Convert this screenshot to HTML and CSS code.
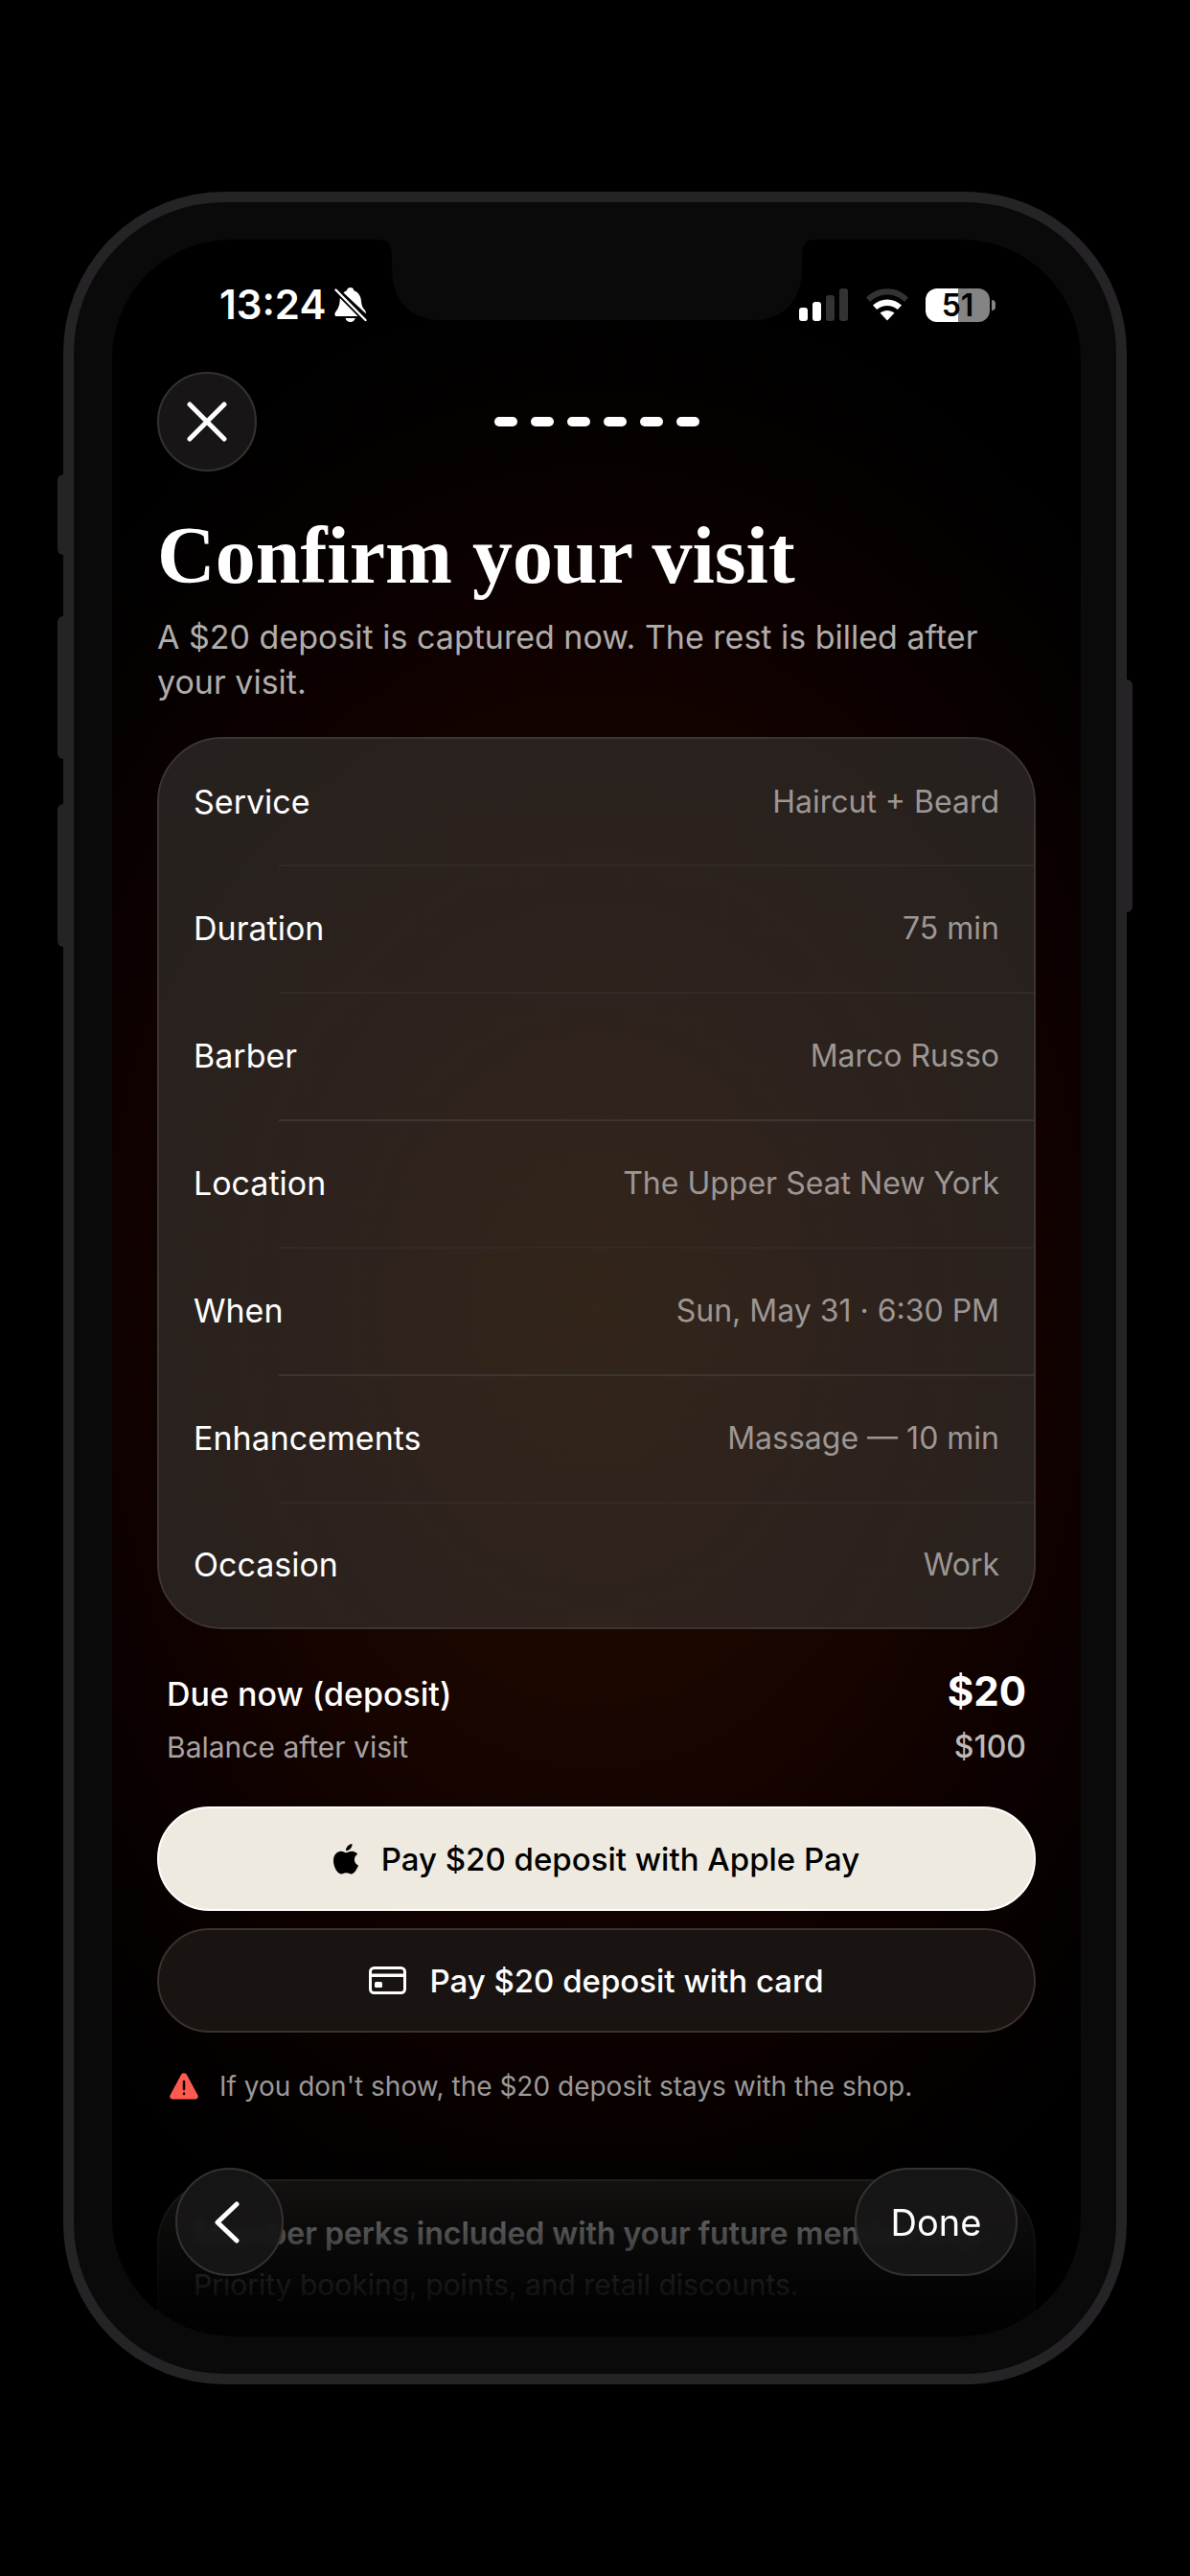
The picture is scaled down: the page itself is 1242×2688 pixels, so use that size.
FILE: index.html
```html
<!DOCTYPE html>
<html lang="en">
<head>
    <meta charset="UTF-8">
    <meta name="viewport" content="width=device-width, initial-scale=1.0">
    <title>Confirm your visit</title>
    <link rel="stylesheet" href="styles.css">
</head>
<body>
    <div class="phone">
        <span class="side-btn mute"></span>
        <span class="side-btn vol-up"></span>
        <span class="side-btn vol-down"></span>
        <span class="side-btn power"></span>

        <div class="screen">
            <svg class="notch" viewBox="0 0 456 84" aria-hidden="true">
                <path d="M0 0H456C446 0 442 6 442 18V30C442 62 424 84 392 84H64C32 84 14 62 14 30V18C14 6 10 0 0 0Z"/>
            </svg>

            <div class="status-bar">
                <div class="status-left">
                    <span class="time">13:24</span>
                    <svg width="34" height="36" viewBox="0 0 34 36" aria-hidden="true">
                        <path fill="#fff" d="M9.500 5.500C10.500 4.300 11.800 3.600 13 3.200C13.300 1.200 14.800 0 16.700 0C18.600 0 20.100 1.200 20.400 3.200C25 4.700 27.500 8.600 28 14C28.300 18.500 29.300 21 31.500 23.200C33 24.800 33 26 32.800 27.200Z"/>
                        <path fill="#fff" d="M5.800 11L24.500 30H2.200C0 30 0 27.500 1.200 25.500C4 21.800 5.600 19.500 5.800 11Z"/>
                        <path fill="#fff" d="M11.500 32H21.800C21 34.600 19.300 36 16.700 36C14.100 36 12.300 34.600 11.500 32Z"/>
                        <path stroke="#fff" stroke-width="2.400" stroke-linecap="round" d="M1.500 2.500L32.500 34"/>
                    </svg>
                </div>
                <div class="status-right">
                    <svg width="52" height="34" viewBox="0 0 52 34" aria-hidden="true">
                        <rect x="0" y="20" width="9" height="14" rx="3" fill="#fff"/>
                        <rect x="14" y="14" width="9" height="20" rx="3" fill="#fff"/>
                        <rect x="28" y="7" width="9" height="27" rx="3" fill="#333"/>
                        <rect x="42" y="0" width="9" height="34" rx="3" fill="#333"/>
                    </svg>
                    <svg width="46" height="34" viewBox="0 0 46 34" aria-hidden="true">
                        <path fill="#333" d="M1 9.500C13-3 33-3 45 9.500L41 14C31 4 15 4 5 14Z"/>
                        <path fill="#fff" d="M8 17.500C16.500 9.500 29.500 9.500 38 17.500L33.800 22C27.500 16.500 18.500 16.500 12.200 22Z"/>
                        <path fill="#fff" d="M15.500 25.500C20 22 26 22 30.500 25.500L23 33.500Z"/>
                    </svg>
                    <span class="battery"><span class="battery-level">51</span></span>
                </div>
            </div>

            <div class="content">
                <div class="top-bar">
                    <button class="glass close-btn" aria-label="Close">
                        <svg width="42" height="42" viewBox="0 0 42 42" aria-hidden="true">
                            <path d="M3 3L39 39M39 3L3 39"/>
                        </svg>
                    </button>
                    <div class="steps">
                        <span></span><span></span><span></span><span></span><span></span><span></span>
                    </div>
                </div>

                <h1>Confirm your visit</h1>
                <p class="intro">A $20 deposit is captured now. The rest is billed after your visit.</p>

                <dl class="summary">
                    <div class="row"><dt>Service</dt><dd>Haircut + Beard</dd></div>
                    <div class="row"><dt>Duration</dt><dd>75 min</dd></div>
                    <div class="row"><dt>Barber</dt><dd>Marco Russo</dd></div>
                    <div class="row strong"><dt>Location</dt><dd>The Upper Seat New York</dd></div>
                    <div class="row"><dt>When</dt><dd>Sun, May 31 · 6:30 PM</dd></div>
                    <div class="row strong"><dt>Enhancements</dt><dd>Massage — 10 min</dd></div>
                    <div class="row"><dt>Occasion</dt><dd>Work</dd></div>
                </dl>

                <dl class="totals">
                    <div class="due"><dt>Due now (deposit)</dt><dd>$20</dd></div>
                    <div class="balance"><dt>Balance after visit</dt><dd>$100</dd></div>
                </dl>

                <div class="actions">
                    <button class="pay apple-pay">
                        <svg width="26" height="32" viewBox="0 0 26 32" aria-hidden="true">
                            <path fill="#000" d="M19.500 0C19.800 3.900 16.600 7.300 13 7.200C12.700 3.700 16 .300 19.500 0ZM13.200 9.300C14.700 9.300 16.400 7.700 19.300 7.700C21.800 7.700 24 9 25.200 10.800C20.500 13.700 21 20.500 26 22.400C24.800 25.900 21.900 31.300 18.600 31.400C16.600 31.400 15.800 30.200 13.400 30.200C11 30.200 10.100 31.400 8.200 31.400C4.200 31.400 0 24.200 0 17.800C0 11.400 3.900 7.900 7.900 7.800C10.200 7.800 12 9.300 13.200 9.300Z"/>
                        </svg>
                        <span>Pay $20 deposit with Apple Pay</span>
                    </button>
                    <button class="pay glass">
                        <svg width="39" height="29" viewBox="0 0 39 29" aria-hidden="true">
                            <rect x="1.500" y="1.500" width="36" height="26" rx="4" fill="none" stroke="#fff" stroke-width="3"/>
                            <path stroke="#fff" stroke-width="3.500" d="M2 9.200H37"/>
                            <rect x="6" y="16" width="8" height="6" rx="1.500" fill="#fff"/>
                        </svg>
                        <span>Pay $20 deposit with card</span>
                    </button>
                </div>

                <p class="warning">
                    <svg width="30" height="28" viewBox="0 0 30 28" aria-hidden="true">
                        <path fill="#ff5a50" d="M12 2C13.300-.500 16.700-.500 18 2L29.300 23C30.500 25.400 29.200 27.500 26.600 27.500H3.400C.800 27.500-.500 25.400 .700 23Z"/>
                        <path stroke="#120000" stroke-width="2.600" stroke-linecap="round" d="M15 9V17M15 21.500V22"/>
                    </svg>
                    <span>If you don't show, the $20 deposit stays with the shop.</span>
                </p>

                <div class="perks">
                    <h2>Member perks included with your future membership</h2>
                    <p>Priority booking, points, and retail discounts.</p>
                </div>
            </div>

            <div class="fade"></div>
            <div class="bottom-bar">
                <button class="glass back-btn" aria-label="Back">
                    <svg width="34" height="44" viewBox="0 0 34 44" aria-hidden="true">
                        <path d="M24 3L4 22L24 41"/>
                    </svg>
                </button>
                <button class="glass done-btn">Done</button>
            </div>
        </div>
    </div>
</body>
</html>
```
FILE: styles.css
```css
* {
    box-sizing: border-box;
}
body {
    margin: 0;
    min-height: 100vh;
    padding: 200px 66px;
    background: #000;
    color: #fff;
    font-family: Inter, "Liberation Sans", sans-serif;
}
h1, h2, p, dl, dd {
    margin: 0;
}
button {
    font: inherit;
    color: inherit;
    border: none;
    padding: 0;
    cursor: pointer;
}
svg {
    display: block;
    flex: none;
}

/* device */
.phone {
    position: relative;
    padding: 39px 37px 39px 40px;
    border: 11px solid #252326;
    border-radius: 168px;
    background: #0a0a0a;
}
.side-btn {
    position: absolute;
    left: -17px;
    width: 6px;
    height: 149px;
    border-radius: 6px 0 0 6px;
    background: #252326;
}
.mute {
    top: 284px;
    height: 84px;
}
.vol-up {
    top: 432px;
}
.vol-down {
    top: 628px;
}
.power {
    left: auto;
    right: -17px;
    top: 498px;
    height: 243px;
    border-radius: 0 6px 6px 0;
}
.screen {
    position: relative;
    height: 2188px;
    overflow: hidden;
    border-radius: 124px;
    background: radial-gradient(ellipse 760px 1060px at 50% 51%, #240c00 0%, #1a0600 40%, #0f0100 66%, #040100 88%, #000 100%);
}
.notch {
    position: absolute;
    top: 0;
    left: 50%;
    width: 456px;
    height: 84px;
    margin-left: -228px;
    fill: #0a0a0a;
}

/* status bar */
.status-bar {
    display: flex;
    justify-content: space-between;
    align-items: center;
    height: 138px;
    padding: 0 95px 2px 112px;
}
.status-left, .status-right {
    display: flex;
    align-items: center;
}
.status-left {
    gap: 9px;
}
.status-right {
    gap: 17px;
}
.time {
    font-size: 42px;
    line-height: 48px;
    font-weight: 600;
}
.battery {
    position: relative;
    width: 67px;
    height: 35px;
    border-radius: 12px;
    background: linear-gradient(90deg, #fff 51%, #848484 51%);
}
.battery::after {
    content: "";
    position: absolute;
    right: -6px;
    top: 12px;
    width: 4px;
    height: 11px;
    border-radius: 0 4px 4px 0;
    background: #848484;
}
.battery-level {
    display: block;
    text-align: center;
    color: #000;
    font-size: 32px;
    line-height: 35px;
    font-weight: 600;
}

/* content */
.content {
    padding: 0 47px;
}
.glass {
    border: 2px solid #353130;
    background: #171515;
}
.top-bar {
    display: grid;
    grid-template-columns: 104px 1fr 104px;
    align-items: center;
}
.close-btn, .back-btn {
    display: flex;
    align-items: center;
    justify-content: center;
    width: 104px;
    height: 104px;
    border-radius: 50%;
}
.close-btn svg, .back-btn svg {
    fill: none;
    stroke: #fff;
    stroke-width: 5px;
    stroke-linecap: round;
    stroke-linejoin: round;
}
.steps {
    display: flex;
    justify-content: center;
    gap: 14px;
}
.steps span {
    width: 24px;
    height: 10px;
    border-radius: 5px;
    background: #fff;
}
h1 {
    margin-top: 40px;
    font-family: "Liberation Serif", serif;
    font-size: 84px;
    line-height: 96px;
    font-weight: 700;
}
.intro {
    margin-top: 13px;
    color: #b0adac;
    font-size: 34px;
    line-height: 47px;
}
.summary {
    margin-top: 34px;
    border: 2px solid #3a3432;
    border-radius: 68px;
    background: radial-gradient(ellipse 600px 760px at 50% 64%, #33251a 0%, #2d221d 50%, #26211e 100%);
    overflow: hidden;
}
.row {
    display: flex;
    justify-content: space-between;
    align-items: center;
    height: 133px;
    padding: 0 36px;
    font-size: 34px;
    line-height: 44px;
}
.row + .row {
    background: linear-gradient(#312a27, #312a27) 125px 0 / 100% 2px no-repeat;
}
.row + .strong {
    background: linear-gradient(#3d3531, #3d3531) 125px 0 / 100% 2px no-repeat;
}
.row:first-child, .row:last-child {
    height: 131px;
}
.row dd {
    color: #9c9795;
    font-size: 32px;
}
.totals {
    margin-top: 38px;
    padding: 0 10px;
}
.totals div {
    display: flex;
    justify-content: space-between;
    align-items: baseline;
}
.due {
    font-size: 34px;
    line-height: 54px;
    font-weight: 500;
}
.due dd {
    font-size: 42px;
    font-weight: 700;
}
.balance {
    color: #a8a3a1;
    font-size: 30px;
    line-height: 56px;
}
.balance dd {
    color: #bebab8;
    font-size: 32px;
    font-weight: 500;
}
.actions {
    display: flex;
    flex-direction: column;
    gap: 18px;
    margin-top: 34px;
}
.pay {
    display: flex;
    align-items: center;
    justify-content: center;
    gap: 24px;
    height: 109px;
    border-radius: 55px;
    font-size: 33px;
    line-height: 44px;
    font-weight: 500;
}
.apple-pay {
    border: 2px solid #fff;
    background: #eeeae0;
    color: #000;
}
.pay.glass {
    border-color: #3b302c;
    background: #191412;
}
.warning {
    display: flex;
    align-items: center;
    gap: 22px;
    margin-top: 36px;
    padding: 0 13px;
    color: #9b9999;
    font-size: 28px;
    line-height: 40px;
}
.perks {
    height: 240px;
    margin-top: 77px;
    padding: 28px 36px;
    border: 2px solid #383634;
    border-radius: 68px;
    background: #24211f;
}
.perks h2 {
    font-size: 32px;
    line-height: 54px;
    font-weight: 600;
    white-space: nowrap;
}
.perks p {
    color: #aaa;
    font-size: 30px;
    line-height: 52px;
}

/* floating controls */
.fade {
    position: absolute;
    left: 0;
    right: 0;
    bottom: 0;
    height: 210px;
    background: linear-gradient(transparent, rgba(0, 0, 0, 0.5) 25%, rgba(0, 0, 0, 0.7) 50%, rgba(0, 0, 0, 0.9) 80%, rgba(0, 0, 0, 0.96));
}
.bottom-bar {
    position: absolute;
    left: 66px;
    right: 66px;
    bottom: 63px;
    display: flex;
    justify-content: space-between;
}
.back-btn, .done-btn {
    height: 113px;
    background: rgba(24, 23, 23, 0.92);
    backdrop-filter: blur(3px);
}
.back-btn {
    width: 113px;
}
.done-btn {
    width: 170px;
    border-radius: 57px;
    font-size: 38px;
}
```
